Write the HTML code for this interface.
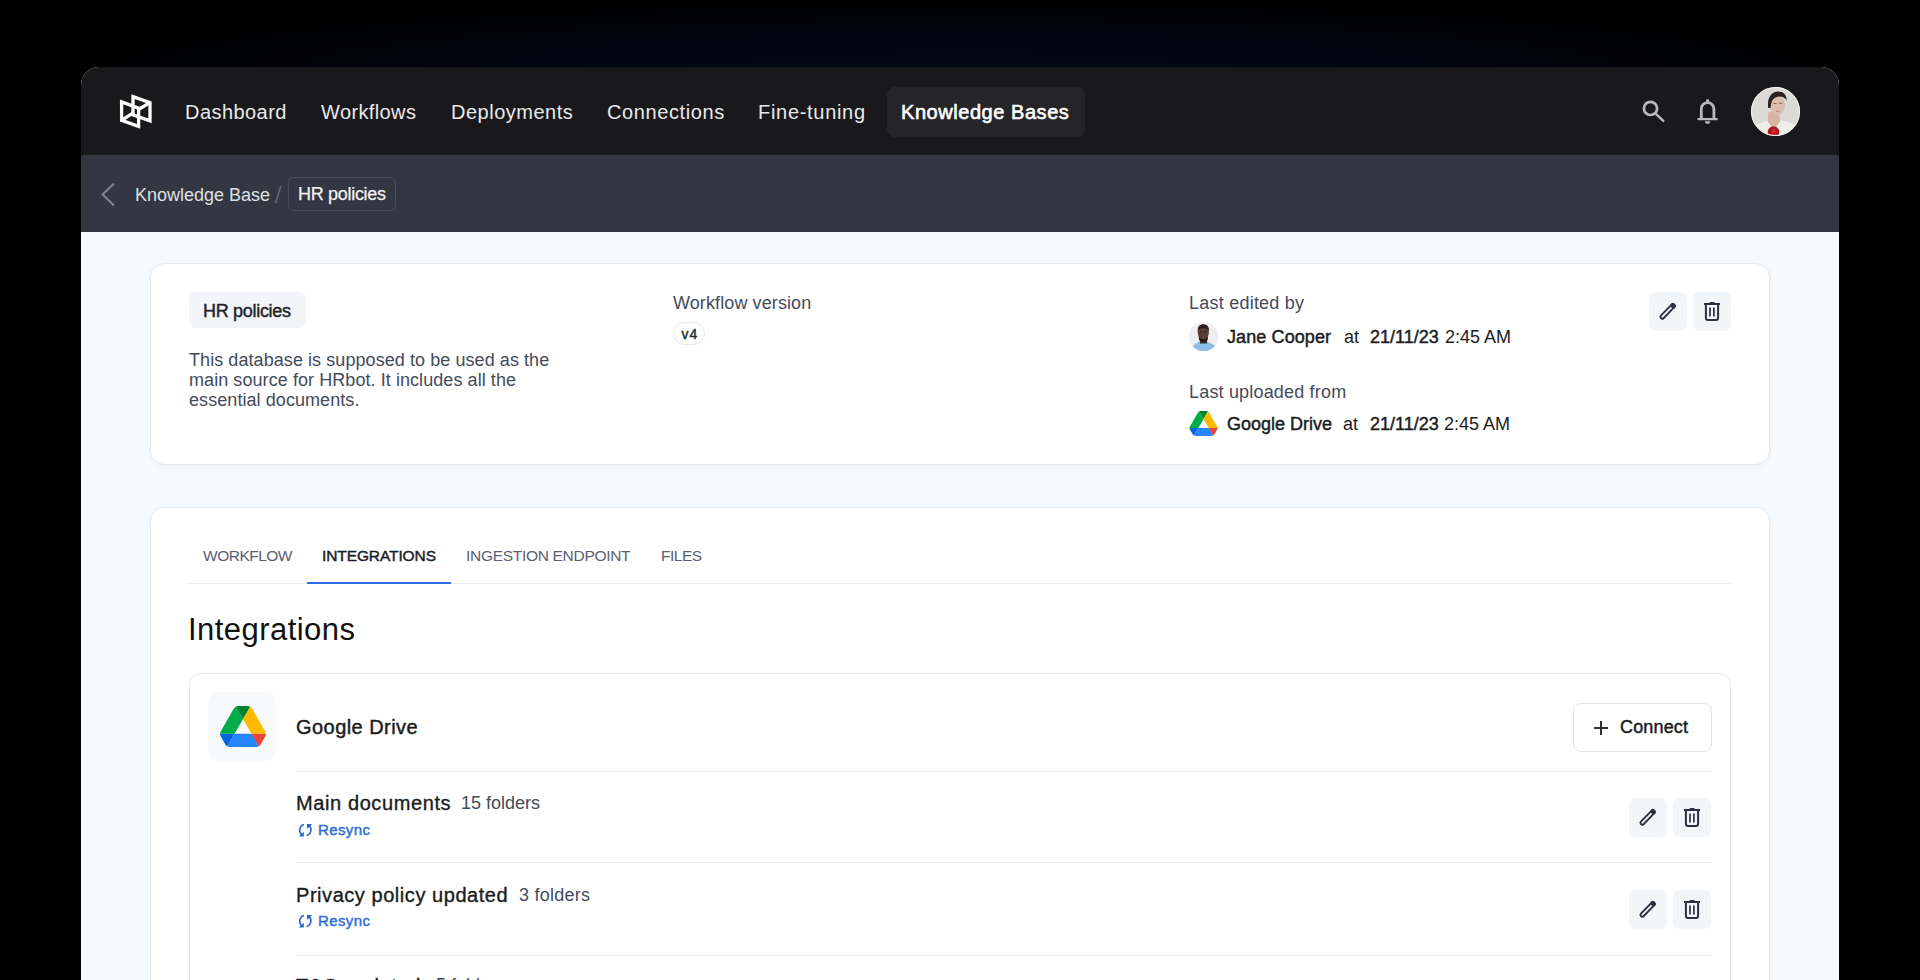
<!DOCTYPE html>
<html>
<head>
<meta charset="utf-8">
<style>
html,body{margin:0;padding:0;width:1920px;height:980px;overflow:hidden;background:#000;}
body{position:relative;font-family:"Liberation Sans",sans-serif;}
.a{position:absolute;white-space:nowrap;line-height:1;}
#glow{position:absolute;left:0;top:0;width:1920px;height:70px;background:radial-gradient(ellipse 900px 70px at 960px 70px,#020716 0%,#01040d 60%,#000 100%);}
#frame{position:absolute;left:81px;top:67px;width:1758px;height:960px;border-radius:18px 18px 0 0;overflow:hidden;background:#f7fafd;}
#nav{position:absolute;left:0;top:0;width:1758px;height:88px;background:#19191c;}
#crumb{position:absolute;left:0;top:88px;width:1758px;height:77px;background:#343641;}
.nv{color:#e9e9ea;font-size:20px;}
.card{position:absolute;background:#fff;border:1px solid #e8e9ec;border-radius:14px;box-shadow:0 2px 6px rgba(20,30,60,0.04);}
.g{color:#444b5a;}
.dk{color:#1b1c20;}
.ibtn{position:absolute;width:38px;height:39px;background:#f3f6f9;border-radius:7px;}
.sb{font-weight:400;-webkit-text-stroke:0.45px currentColor;}
.div{position:absolute;height:1px;background:#e9ecf0;}
</style>
</head>
<body>
<div id="glow"></div>
<div id="frame"></div>
<div id="nav" style="left:81px;top:67px;border-radius:18px 18px 0 0;"></div>
<div id="crumb" style="left:81px;top:155px;"></div>

<!-- logo -->
<svg class="a" style="left:116px;top:90px" width="40" height="42" viewBox="116 90 40 42">
 <g fill="none" stroke="#fff" stroke-width="3.3" stroke-linejoin="miter">
  <path d="M121.6 101.9 L138.6 108.1 L138.6 126.4 L121.6 120.4 Z"/>
  <path d="M133 96.6 L150 102.6 L150 120.8 L133 114.8 Z"/>
  <path d="M121.6 120.4 L134 112.3 M137.6 110 L150 102.6"/>
 </g>
</svg>

<span class="a nv" id="n1" style="letter-spacing:0.44px;left:185px;top:102px">Dashboard</span>
<span class="a nv" id="n2" style="letter-spacing:0.38px;left:321px;top:102px">Workflows</span>
<span class="a nv" id="n3" style="letter-spacing:0.5px;left:451px;top:102px">Deployments</span>
<span class="a nv" id="n4" style="letter-spacing:0.6px;left:607px;top:102px">Connections</span>
<span class="a nv" id="n5" style="letter-spacing:0.7px;left:758px;top:102px">Fine-tuning</span>
<div class="a" style="left:887px;top:87px;width:198px;height:50px;background:#252528;border-radius:8px;"></div>
<span class="a nv sb" id="n6" style="letter-spacing:0.55px;-webkit-text-stroke:0.6px #fff;left:901px;top:102px;color:#fff">Knowledge Bases</span>

<!-- search -->
<svg class="a" style="left:1638px;top:96px" width="32" height="32" viewBox="0 0 32 32">
 <circle cx="12.5" cy="12.4" r="6.6" fill="none" stroke="#b9b9bb" stroke-width="2.7"/>
 <path d="M17.6 17.6 L25.3 24.9" stroke="#b9b9bb" stroke-width="2.5" stroke-linecap="round"/>
</svg>
<!-- bell -->
<svg class="a" style="left:1693px;top:96px" width="30" height="32" viewBox="0 0 30 32">
 <path d="M8.3 22.8 V13 a6.3 6.3 0 0 1 12.6 0 V22.8" fill="none" stroke="#b9b9bb" stroke-width="2.8"/>
 <path d="M5.4 23.1 H23.8" stroke="#b9b9bb" stroke-width="2.3" stroke-linecap="round"/>
 <path d="M12 25.2 a2.6 2.6 0 0 0 5.2 0 Z" fill="#b9b9bb"/>
 <circle cx="14.6" cy="4.6" r="1.6" fill="#b9b9bb"/>
</svg>
<!-- avatar -->
<svg class="a" style="left:1751px;top:87px" width="49" height="49" viewBox="0 0 49 49">
 <defs><clipPath id="cav"><circle cx="24.5" cy="24.5" r="24.3"/></clipPath></defs>
 <g clip-path="url(#cav)">
  <rect width="49" height="49" fill="#dbdad7"/>
  <path d="M0 49 L0 41 C5 37 11 35 17 33.5 L22.5 43 L28.5 33.5 C35 34 42 36.5 49 40 L49 49 Z" fill="#eeede6"/>
  <path d="M17.5 25 L28 25 L29 34 L23 43.5 L16.5 34 Z" fill="#d6b5a3"/>
  <ellipse cx="26.3" cy="18.2" rx="7.6" ry="9.6" fill="#dcbcab"/>
  <path d="M17.2 21 C15.8 11 20.5 4.8 26.8 4.6 C32.6 4.5 35.8 8 35.6 13.5 C33.5 9.5 28.5 8.4 24.5 10.5 C21.3 12.2 19.8 15.5 19.6 21 Z" fill="#2b211e"/>
  <path d="M22.5 16.5 h3 M28.3 16.3 h3" stroke="#7a5a50" stroke-width="0.9"/>
  <path d="M25 24.2 h3.6" stroke="#b07f77" stroke-width="1"/>
  <circle cx="22.5" cy="45" r="5.8" fill="#ad1420"/>
  <circle cx="23.2" cy="44.2" r="2.6" fill="#c92531"/>
 </g>
 <circle cx="24.5" cy="24.5" r="24" fill="none" stroke="#f1f0ed" stroke-width="1.1"/>
</svg>

<!-- breadcrumb -->
<svg class="a" style="left:98px;top:180px" width="20" height="30" viewBox="0 0 20 30">
 <path d="M16 3.5 L4.6 14.5 L16 25.5" fill="none" stroke="#7d8494" stroke-width="2.1"/>
</svg>
<span class="a" id="bc1" style="left:135px;top:186px;font-size:18px;color:#dfe0e4">Knowledge Base</span>
<svg class="a" style="left:270px;top:182px" width="16" height="26" viewBox="270 182 16 26"><path d="M280.8 186 L275.6 203.2" stroke="#656975" stroke-width="1.6"/></svg>
<div class="a" style="left:288px;top:177px;width:108px;height:34px;border:1px solid #4a4d59;border-radius:6px;box-sizing:border-box;"></div>
<span class="a sb" id="bc3" style="letter-spacing:-0.3px;-webkit-text-stroke:0.25px #f2f2f4;left:298px;top:185px;font-size:18px;color:#f2f2f4">HR policies</span>

<!-- card 1 -->
<div class="card" style="left:149.5px;top:263px;width:1618.5px;height:199.5px;"></div>
<div class="a" style="left:189px;top:292px;width:117px;height:36px;background:#f3f5f8;border-radius:7px;"></div>
<span class="a dk sb" id="c1" style="letter-spacing:-0.3px;left:203px;top:302px;font-size:18px;color:#22252d">HR policies</span>
<div class="a g" id="desc" style="letter-spacing:0.07px;left:189px;top:349.5px;font-size:18px;line-height:20px;white-space:normal;width:380px;">This database is supposed to be used as the main source for HRbot. It includes all the essential documents.</div>

<span class="a g" id="wv" style="letter-spacing:0.1px;left:673px;top:294px;font-size:18px">Workflow version</span>
<div class="a" style="left:673px;top:322px;width:32px;height:23px;border:1px solid #e5e7ec;border-radius:12px;box-sizing:border-box;"></div>
<span class="a sb" id="v4" style="letter-spacing:0.9px;left:681.5px;top:327px;font-size:14px;color:#2a2d35">v4</span>

<span class="a g" id="le" style="letter-spacing:0.23px;left:1189px;top:294px;font-size:18px">Last edited by</span>
<!-- small avatar -->
<svg class="a" style="left:1189.3px;top:321.9px" width="29.4" height="29.4" viewBox="0 0 29.4 29.4">
 <defs><clipPath id="cav2"><circle cx="14.7" cy="14.7" r="14.7"/></clipPath></defs>
 <g clip-path="url(#cav2)">
  <rect width="29.4" height="29.4" fill="#eeeef0"/>
  <path d="M3.2 26 C5 21.5 9 19.8 14.5 19.8 C20 19.8 24.5 21.5 27 26 L26 30 L4 30 Z" fill="#8dbde9"/>
  <path d="M10.3 15 L18.6 15 L18 21.5 L11 21.5 Z" fill="#3a2a24"/>
  <ellipse cx="14.3" cy="10.3" rx="5.6" ry="7.4" fill="#5a4036"/>
  <path d="M8.8 10 C8.2 4.5 11 2.3 14.3 2.3 C17.8 2.3 20.6 4.5 20 10 C19.5 7.2 17.8 6.3 14.3 6.3 C11 6.3 9.3 7.2 8.8 10 Z" fill="#2a201c"/>
  <path d="M9.8 13 C10.5 19 18.2 19 18.8 13 L18.6 17 C17 20.5 11.5 20.5 10 17 Z" fill="#1c1512"/>
  <path d="M11.2 10 h2 M15.5 10 h2" stroke="#1f1612" stroke-width="1"/>
 </g>
</svg>
<span class="a dk sb" id="jc" style="letter-spacing:0.1px;left:1227px;top:328px;font-size:18px">Jane Cooper</span>
<span class="a dk" id="at1" style="left:1344px;top:328px;font-size:18px">at</span>
<span class="a dk sb" id="d1" style="letter-spacing:0px;left:1370px;top:328px;font-size:18px">21/11/23</span>
<span class="a dk" id="t1" style="left:1445px;top:328px;font-size:18px">2:45 AM</span>

<span class="a g" id="lu" style="letter-spacing:0.18px;left:1189px;top:383px;font-size:18px">Last uploaded from</span>
<!-- small drive -->
<svg class="a" style="left:1189px;top:411px" width="29" height="25" viewBox="0 0 87.3 78">
 <path d="m6.6 66.85 3.85 6.65c.8 1.4 1.95 2.5 3.3 3.3l13.75-23.8h-27.5c0 1.55.4 3.1 1.2 4.5z" fill="#0066da"/>
 <path d="m43.65 25-13.75-23.8c-1.350.8-2.5 1.9-3.3 3.3l-25.4 44a9.06 9.06 0 0 0 -1.2 4.5h27.5z" fill="#00ac47"/>
 <path d="m73.55 76.8c1.35-.8 2.5-1.9 3.3-3.3l1.6-2.75 7.650-13.25c.8-1.4 1.2-2.95 1.2-4.5h-27.502l5.852 11.5z" fill="#ea4335"/>
 <path d="m43.65 25 13.75-23.8c-1.35-.8-2.9-1.2-4.5-1.2h-18.5c-1.6 0-3.150.45-4.5 1.2z" fill="#00832d"/>
 <path d="m59.8 53h-32.3l-13.75 23.8c1.350.8 2.9 1.2 4.5 1.2h50.8c1.6 0 3.15-.45 4.5-1.2z" fill="#2684fc"/>
 <path d="m73.4 26.5-12.7-22c-.8-1.4-1.95-2.5-3.3-3.3l-13.75 23.8 16.15 28h27.45c0-1.55-.4-3.1-1.2-4.5z" fill="#ffba00"/>
</svg>
<span class="a dk sb" id="gd" style="letter-spacing:0px;left:1227px;top:415px;font-size:18px">Google Drive</span>
<span class="a dk" id="at2" style="left:1343px;top:415px;font-size:18px">at</span>
<span class="a dk sb" id="d2" style="letter-spacing:0px;left:1370px;top:415px;font-size:18px">21/11/23</span>
<span class="a dk" id="t2" style="left:1444px;top:415px;font-size:18px">2:45 AM</span>

<div class="ibtn" style="left:1649px;top:292px"></div>
<div class="ibtn" style="left:1693px;top:292px"></div>

<!-- card 2 -->
<div class="card" style="left:149.5px;top:506.5px;width:1618.5px;height:600px;"></div>
<div class="div" style="left:188px;top:583px;width:1543px;"></div>
<span class="a g" id="tb1" style="letter-spacing:-0.5px;left:203px;top:547.5px;font-size:15.5px;color:#5a6070">WORKFLOW</span>
<span class="a sb" id="tb2" style="letter-spacing:-0.1px;left:322px;top:547.5px;font-size:15.5px;color:#1c1e24">INTEGRATIONS</span>
<span class="a g" id="tb3" style="letter-spacing:-0.3px;left:466px;top:547.5px;font-size:15.5px;color:#5a6070">INGESTION ENDPOINT</span>
<span class="a g" id="tb4" style="letter-spacing:-0.5px;left:661px;top:547.5px;font-size:15.5px;color:#5a6070">FILES</span>
<div class="a" style="left:307px;top:581.6px;width:144px;height:2.7px;background:#2f6ae8;"></div>

<span class="a dk" id="h1" style="left:188px;top:613.6px;font-size:31px;letter-spacing:0.45px;color:#111">Integrations</span>

<div class="a" style="left:189px;top:673px;width:1542px;height:400px;border:1px solid #e7e8eb;border-radius:12px;box-sizing:border-box;background:#fff"></div>
<div class="a" style="left:208px;top:692px;width:68px;height:69px;background:#f8f9fb;border-radius:10px;"></div>
<svg class="a" style="left:220px;top:706px" width="46" height="41" viewBox="0 0 87.3 78">
 <path d="m6.6 66.85 3.85 6.65c.8 1.4 1.95 2.5 3.3 3.3l13.75-23.8h-27.5c0 1.55.4 3.1 1.2 4.5z" fill="#0066da"/>
 <path d="m43.65 25-13.75-23.8c-1.350.8-2.5 1.9-3.3 3.3l-25.4 44a9.06 9.06 0 0 0 -1.2 4.5h27.5z" fill="#00ac47"/>
 <path d="m73.55 76.8c1.35-.8 2.5-1.9 3.3-3.3l1.6-2.75 7.650-13.25c.8-1.4 1.2-2.95 1.2-4.5h-27.502l5.852 11.5z" fill="#ea4335"/>
 <path d="m43.65 25 13.75-23.8c-1.35-.8-2.9-1.2-4.5-1.2h-18.5c-1.6 0-3.150.45-4.5 1.2z" fill="#00832d"/>
 <path d="m59.8 53h-32.3l-13.75 23.8c1.350.8 2.9 1.2 4.5 1.2h50.8c1.6 0 3.15-.45 4.5-1.2z" fill="#2684fc"/>
 <path d="m73.4 26.5-12.7-22c-.8-1.4-1.95-2.5-3.3-3.3l-13.75 23.8 16.15 28h27.45c0-1.55-.4-3.1-1.2-4.5z" fill="#ffba00"/>
</svg>
<span class="a dk sb" id="gd2" style="letter-spacing:0.45px;left:296px;top:717px;font-size:20px">Google Drive</span>

<div class="a" style="left:1573px;top:703px;width:139px;height:49px;border:1px solid #e4e5e8;border-radius:8px;box-sizing:border-box;background:#fff"></div>
<svg class="a" style="left:1592px;top:719px" width="18" height="18" viewBox="0 0 18 18">
 <path d="M9 2 V16 M2 9 H16" stroke="#2a3040" stroke-width="2"/>
</svg>
<span class="a dk sb" id="cn" style="letter-spacing:0.15px;left:1620px;top:718px;font-size:18px">Connect</span>

<div class="div" style="left:296px;top:771px;width:1416px;"></div>
<span class="a dk" id="md" style="letter-spacing:0.6px;-webkit-text-stroke:0.35px #1b1c20;left:296px;top:793px;font-size:20px">Main documents</span>
<span class="a g" id="f15" style="left:461px;top:794px;font-size:18px">15 folders</span>
<span class="a sb" id="rs1" style="letter-spacing:0.4px;left:318px;top:822px;font-size:15px;color:#2d6fd8">Resync</span>
<div class="ibtn" style="left:1629px;top:798px"></div>
<div class="ibtn" style="left:1673px;top:798px"></div>

<div class="div" style="left:296px;top:862px;width:1416px;"></div>
<span class="a dk" id="pp" style="letter-spacing:0.55px;-webkit-text-stroke:0.35px #1b1c20;left:296px;top:885px;font-size:20px">Privacy policy updated</span>
<span class="a g" id="f3" style="letter-spacing:0.25px;left:519px;top:886px;font-size:18px">3 folders</span>
<span class="a sb" id="rs2" style="letter-spacing:0.4px;left:318px;top:913px;font-size:15px;color:#2d6fd8">Resync</span>
<div class="ibtn" style="left:1629px;top:890px"></div>
<div class="ibtn" style="left:1673px;top:890px"></div>

<div class="div" style="left:296px;top:955px;width:1416px;"></div>
<span class="a dk" id="tc" style="letter-spacing:0.64px;-webkit-text-stroke:0.35px #1b1c20;left:296px;top:975.6px;font-size:20px">T&amp;C updated</span>
<span class="a g" id="f5" style="left:436px;top:976px;font-size:18px">5 folders</span>

<svg class="a" style="left:1649px;top:292px" width="38" height="39" viewBox="0 0 38 39"><g transform="translate(18.6 19.4) rotate(-46)"><rect x="-9.35" y="-1.85" width="18.7" height="3.7" rx="1.6" fill="none" stroke="#2b3142" stroke-width="1.9"/><rect x="5.6" y="-2.8" width="4.7" height="5.6" rx="1.8" fill="#2b3142"/></g></svg>
<svg class="a" style="left:1629px;top:798px" width="38" height="39" viewBox="0 0 38 39"><g transform="translate(18.6 19.4) rotate(-46)"><rect x="-9.35" y="-1.85" width="18.7" height="3.7" rx="1.6" fill="none" stroke="#2b3142" stroke-width="1.9"/><rect x="5.6" y="-2.8" width="4.7" height="5.6" rx="1.8" fill="#2b3142"/></g></svg>
<svg class="a" style="left:1629px;top:890px" width="38" height="39" viewBox="0 0 38 39"><g transform="translate(18.6 19.4) rotate(-46)"><rect x="-9.35" y="-1.85" width="18.7" height="3.7" rx="1.6" fill="none" stroke="#2b3142" stroke-width="1.9"/><rect x="5.6" y="-2.8" width="4.7" height="5.6" rx="1.8" fill="#2b3142"/></g></svg>
<svg class="a" style="left:1693px;top:292px" width="38" height="39" viewBox="0 0 38 39"><g fill="none" stroke="#2b3142"><path d="M11 12 H27" stroke-width="2"/><path d="M12.9 12 V25.8 a2.2 2.2 0 0 0 2.2 2.2 H22.9 a2.2 2.2 0 0 0 2.2 -2.2 V12" stroke-width="2"/><path d="M17 15.5 V24.5 M20.9 15.5 V24.5" stroke-width="1.7"/></g><rect x="16.5" y="10.1" width="5.2" height="2.6" rx="0.8" fill="#2b3142"/></svg>
<svg class="a" style="left:1673px;top:798px" width="38" height="39" viewBox="0 0 38 39"><g fill="none" stroke="#2b3142"><path d="M11 12 H27" stroke-width="2"/><path d="M12.9 12 V25.8 a2.2 2.2 0 0 0 2.2 2.2 H22.9 a2.2 2.2 0 0 0 2.2 -2.2 V12" stroke-width="2"/><path d="M17 15.5 V24.5 M20.9 15.5 V24.5" stroke-width="1.7"/></g><rect x="16.5" y="10.1" width="5.2" height="2.6" rx="0.8" fill="#2b3142"/></svg>
<svg class="a" style="left:1673px;top:890px" width="38" height="39" viewBox="0 0 38 39"><g fill="none" stroke="#2b3142"><path d="M11 12 H27" stroke-width="2"/><path d="M12.9 12 V25.8 a2.2 2.2 0 0 0 2.2 2.2 H22.9 a2.2 2.2 0 0 0 2.2 -2.2 V12" stroke-width="2"/><path d="M17 15.5 V24.5 M20.9 15.5 V24.5" stroke-width="1.7"/></g><rect x="16.5" y="10.1" width="5.2" height="2.6" rx="0.8" fill="#2b3142"/></svg>
<svg class="a" style="left:298px;top:823px" width="15" height="15" viewBox="0 0 15 15"><g fill="none" stroke="#2468d2" stroke-width="1.6"><path d="M5.9 1.5 C0.9 3.2 0.6 9.6 3.9 11.8"/><path d="M8.6 12.6 C13.8 10.9 14.1 4.4 10.6 2.3"/></g><path d="M0.8 13.6 L5.8 13.6 L5.8 8.8 Z" fill="#2468d2"/><path d="M9 0.9 L14.1 0.9 L9 5.9 Z" fill="#2468d2"/></svg>
<svg class="a" style="left:298px;top:914px" width="15" height="15" viewBox="0 0 15 15"><g fill="none" stroke="#2468d2" stroke-width="1.6"><path d="M5.9 1.5 C0.9 3.2 0.6 9.6 3.9 11.8"/><path d="M8.6 12.6 C13.8 10.9 14.1 4.4 10.6 2.3"/></g><path d="M0.8 13.6 L5.8 13.6 L5.8 8.8 Z" fill="#2468d2"/><path d="M9 0.9 L14.1 0.9 L9 5.9 Z" fill="#2468d2"/></svg>
</body>
</html>
